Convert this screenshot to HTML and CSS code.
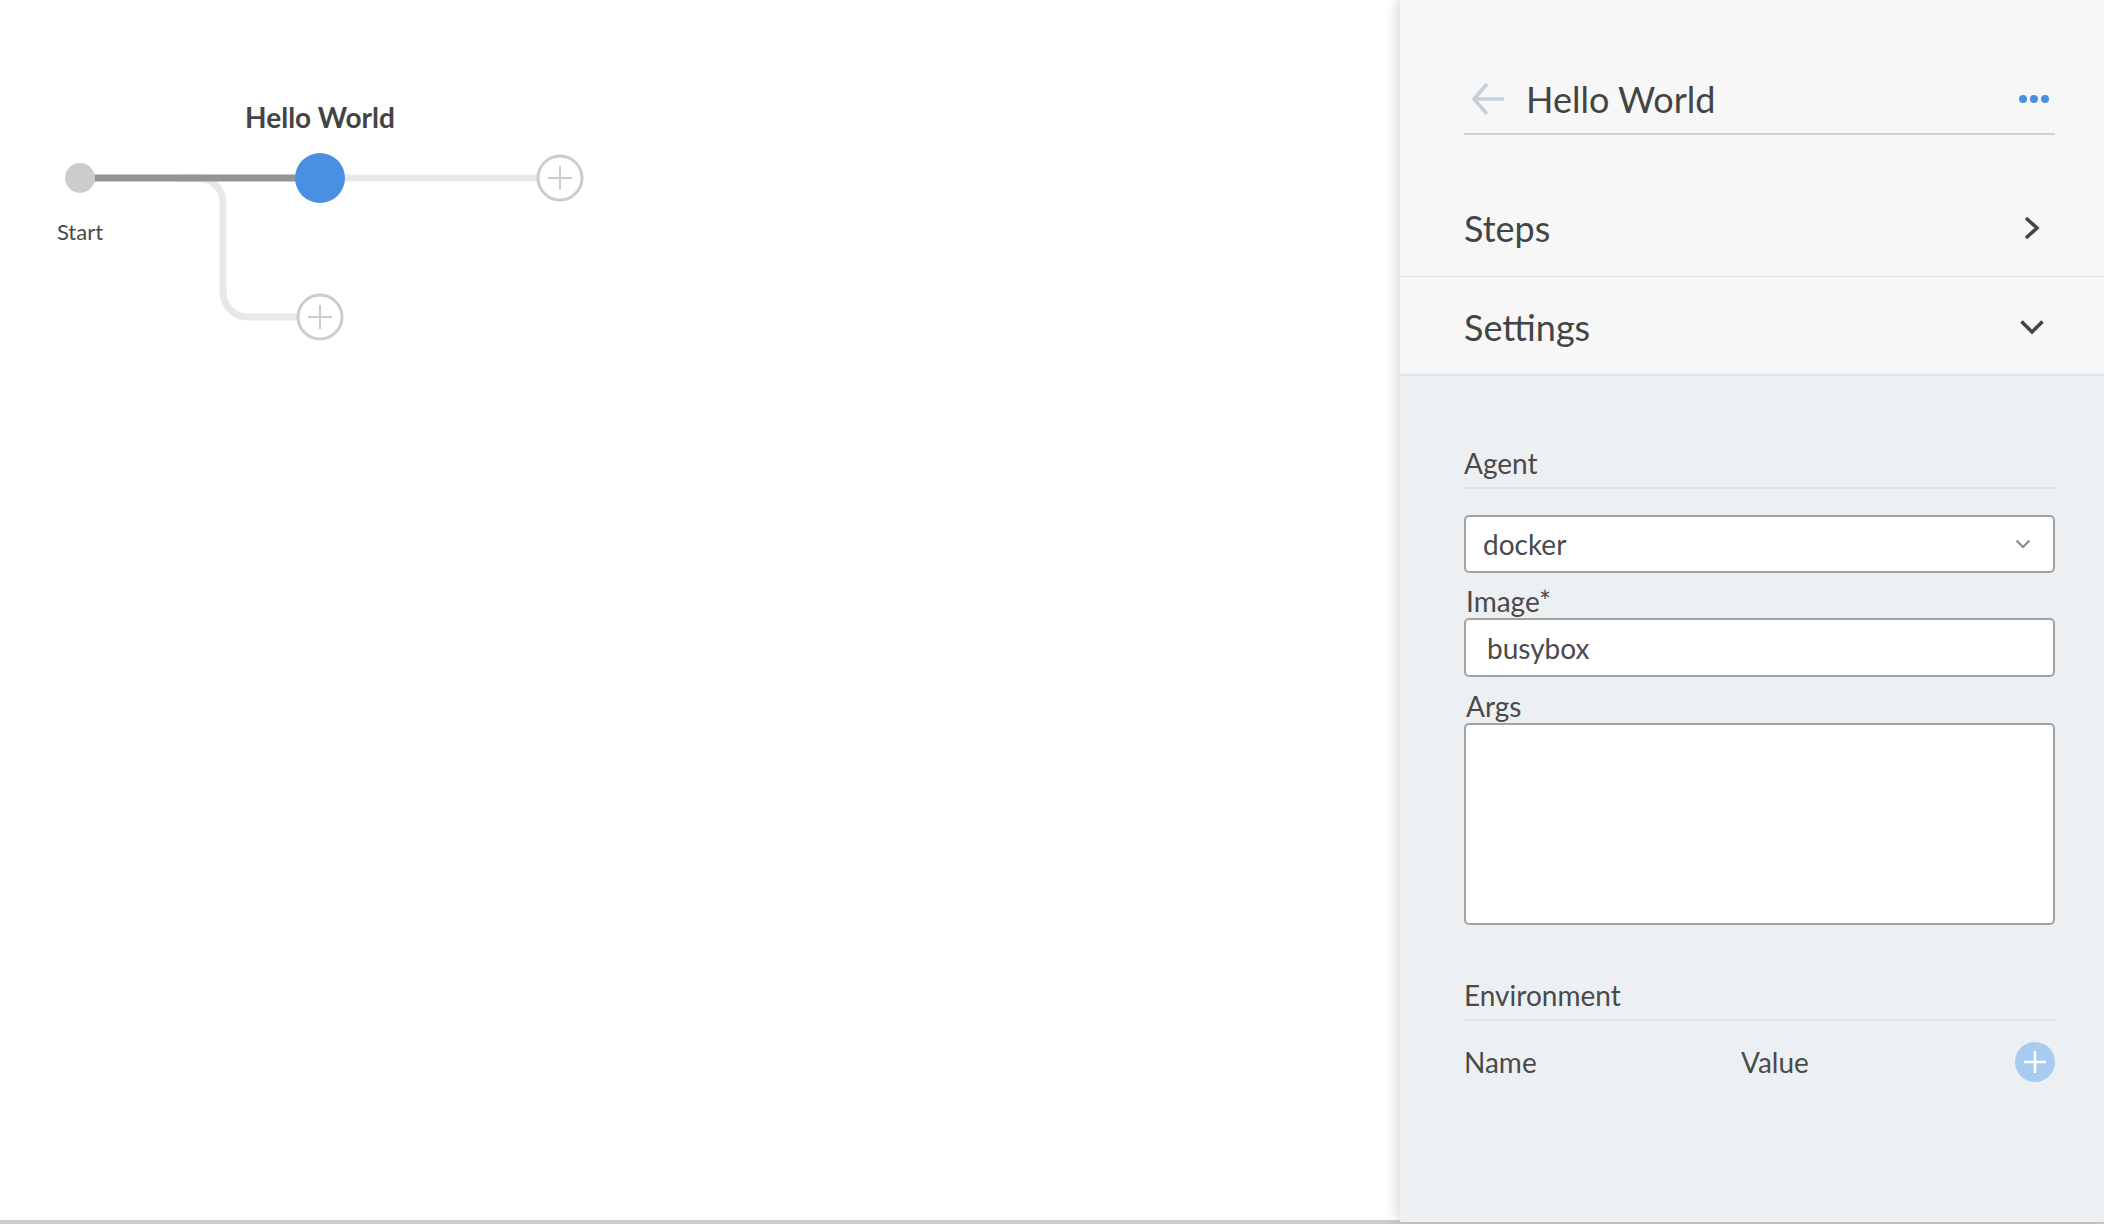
FILE: index.html
```html
<!DOCTYPE html>
<html>
<head>
<meta charset="utf-8">
<link rel="stylesheet" href="styles.css">
</head>
<body>
<div class="canvas">
  <svg class="graph" width="640" height="360" viewBox="0 0 640 360">
    <path class="edge-light" d="M 180 178 H 198 A 25 25 0 0 1 223 203 V 292 A 25 25 0 0 0 248 317 H 298"/>
    <line class="edge-dark" x1="90" y1="178" x2="300" y2="178"/>
    <line class="edge-light" x1="340" y1="178" x2="540" y2="178"/>
    <circle class="node-start" cx="80" cy="178" r="15"/>
    <circle class="node-stage" cx="320" cy="178" r="25"/>
    <g class="node-add">
      <circle cx="560" cy="178" r="22"/>
      <line x1="548" y1="178" x2="572" y2="178"/>
      <line x1="560" y1="166" x2="560" y2="190"/>
    </g>
    <g class="node-add">
      <circle cx="320" cy="317" r="22"/>
      <line x1="308" y1="317" x2="332" y2="317"/>
      <line x1="320" y1="305" x2="320" y2="329"/>
    </g>
    <text class="stage-label" x="320" y="128" text-anchor="middle">Hello World</text>
    <text class="start-label" x="80" y="240" text-anchor="middle">Start</text>
  </svg>
</div>
<aside class="panel">
  <header class="panel-header">
    <div class="header-row">
      <svg class="back" width="34" height="34" viewBox="0 0 34 34">
        <polyline points="16,2 3,17 16,32" />
        <line x1="3" y1="17" x2="33" y2="17"/>
      </svg>
      <h1 class="title">Hello World</h1>
      <div class="dots"><span></span><span></span><span></span></div>
    </div>
  </header>
  <div class="accordion">
    <div class="acc-row">
      <span class="acc-label">Steps</span>
      <svg class="chev" width="26" height="26" viewBox="0 0 26 26"><polyline points="7,3 18,13 7,23"/></svg>
    </div>
    <div class="acc-row acc-open">
      <span class="acc-label">Settings</span>
      <svg class="chev" width="26" height="26" viewBox="0 0 26 26"><polyline points="2.5,7.5 13,18 23.5,7.5"/></svg>
    </div>
  </div>
  <div class="settings">
    <div class="section-title">Agent</div>
    <div class="select">
      <span>docker</span>
      <svg class="select-chev" width="16" height="10" viewBox="0 0 16 10"><polyline points="1.5,1.5 8,8 14.5,1.5"/></svg>
    </div>
    <label class="field-label">Image*</label>
    <div class="input">busybox</div>
    <label class="field-label">Args</label>
    <div class="textarea"></div>
    <div class="section-title env-title">Environment</div>
    <div class="env-row">
      <span>Name</span>
      <span>Value</span>
      <span class="add-btn">
        <svg width="40" height="40" viewBox="0 0 40 40"><line x1="9" y1="20" x2="31" y2="20"/><line x1="20" y1="9" x2="20" y2="31"/></svg>
      </span>
    </div>
  </div>
</aside>
</body>
</html>
```

FILE: styles.css
```css
* { box-sizing: border-box; }
html, body {
  margin: 0;
  height: 1224px;
  overflow: hidden;
}
body {
  background: #cccccc;
  display: flex;
  align-items: flex-start;
  font-family: Lato, "Noto Sans", sans-serif;
  color: #4a4a4a;
}
.canvas {
  flex: 1;
  height: 1220px;
  background: #ffffff;
  position: relative;
}
.graph {
  position: absolute;
  left: 0;
  top: 0;
}
.edge-dark {
  stroke: #949494;
  stroke-width: 7;
}
.edge-light {
  stroke: #e8e8e8;
  stroke-width: 7;
  fill: none;
}
.node-start { fill: #cccccc; }
.node-stage { fill: #4a90e2; }
.node-add circle {
  fill: #ffffff;
  stroke: #cccccc;
  stroke-width: 3;
}
.node-add line {
  stroke: #cccccc;
  stroke-width: 2;
}
.stage-label {
  font-family: Lato, sans-serif;
  font-weight: 700;
  font-size: 28px;
  fill: #444444;
}
.start-label {
  font-family: Lato, sans-serif;
  font-size: 22px;
  fill: #4a4a4a;
}

.panel {
  width: 704px;
  height: 1222px;
  background: #f7f7f7;
  box-shadow: -3px 0 12px rgba(0, 0, 0, 0.16);
  position: relative;
  z-index: 1;
  display: flex;
  flex-direction: column;
}
.panel-header {
  margin: 0 49px 0 64px;
  padding-top: 68px;
}
.header-row {
  height: 67px;
  display: flex;
  align-items: center;
  border-bottom: 2px solid #c9d4df;
  padding-bottom: 4px;
}
.back {
  margin-left: 7px;
  margin-right: 21px;
  fill: none;
  stroke: #c5d0da;
  stroke-width: 3.5;
}
.title {
  margin: 0;
  font-size: 36px;
  font-weight: 400;
  color: #444444;
  line-height: 1;
}
.dots {
  margin-left: auto;
  margin-right: 6px;
  display: flex;
  gap: 3px;
}
.dots span {
  width: 8px;
  height: 8px;
  border-radius: 50%;
  background: #4a90e2;
}
.accordion {
  margin-top: 45px;
}
.acc-row {
  height: 97px;
  border-bottom: 1px solid #dde3e8;
  display: flex;
  align-items: center;
  justify-content: space-between;
  padding: 0 59px 0 64px;
}
.acc-open {
  height: 99px;
  border-bottom: 2px solid #dde3e8;
  padding-top: 3px;
}
.acc-label {
  font-size: 36px;
  color: #444444;
}
.chev {
  fill: none;
  stroke: #444444;
  stroke-width: 3.5;
}
.settings {
  flex: 1;
  background: #edf0f3;
  padding: 70px 49px 0 64px;
}
.section-title {
  font-size: 28px;
  line-height: 34px;
  padding-bottom: 7px;
  border-bottom: 2px solid #dfe4e9;
  color: #4a4a4a;
}
.select {
  margin-top: 26px;
  height: 58px;
  background: #ffffff;
  border: 2px solid #a3a3a3;
  border-radius: 5px;
  display: flex;
  align-items: center;
  justify-content: space-between;
  padding: 0 22px 0 17px;
  font-size: 28px;
}
.select-chev {
  fill: none;
  stroke: #8a8a8a;
  stroke-width: 2;
}
.field-label {
  display: block;
  font-size: 28px;
  line-height: 34px;
  margin-top: 11px;
  padding-left: 2px;
}
.input {
  height: 59px;
  background: #ffffff;
  border: 2px solid #a3a3a3;
  border-radius: 5px;
  display: flex;
  align-items: center;
  padding-left: 21px;
  font-size: 28px;
}
.input + .field-label {
  margin-top: 12px;
}
.textarea {
  height: 202px;
  background: #ffffff;
  border: 2px solid #a3a3a3;
  border-radius: 5px;
}
.env-title {
  margin-top: 53px;
}
.env-row {
  margin-top: 21px;
  display: grid;
  grid-template-columns: 277px 1fr 40px;
  align-items: center;
  height: 40px;
  font-size: 28px;
}
.add-btn {
  width: 40px;
  height: 40px;
  border-radius: 50%;
  background: #a8cbf0;
  display: block;
}
.add-btn svg {
  display: block;
  stroke: #ffffff;
  stroke-width: 2.5;
}
```
